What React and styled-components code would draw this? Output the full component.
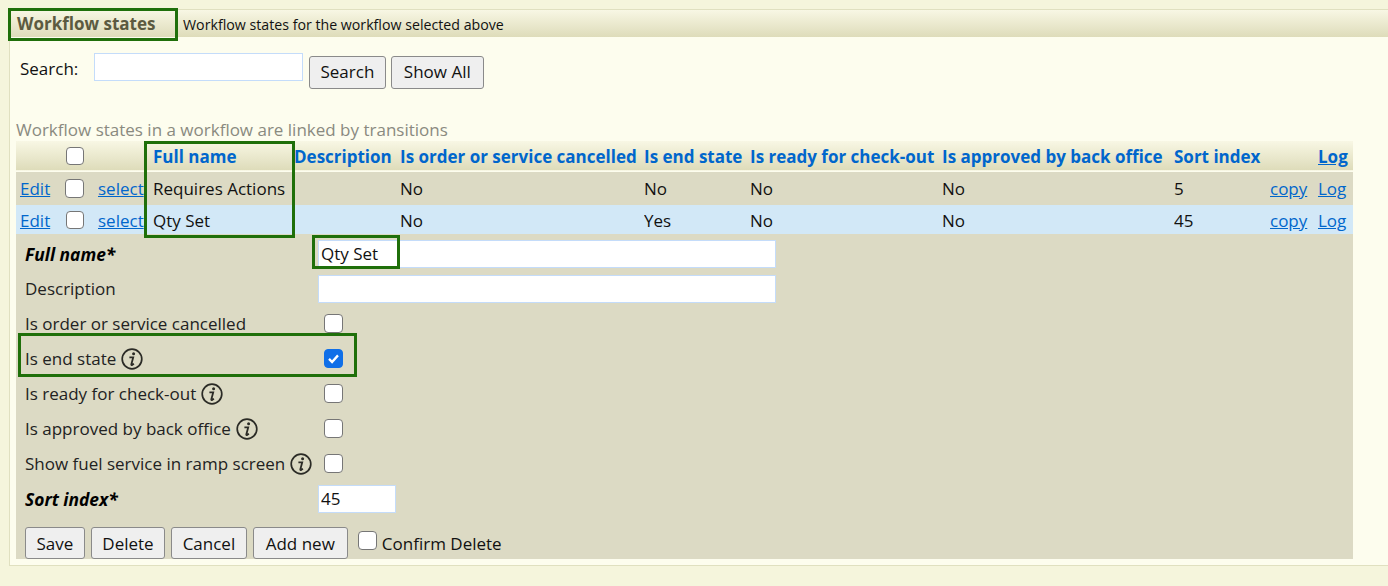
import React from 'react'
import styled, { createGlobalStyle } from 'styled-components'

const Global = createGlobalStyle`
  html, body { margin: 0; padding: 0; background: #f5f5dc; }
  body { font-family: "Open Sans", "Noto Sans", sans-serif; font-size: 17px; color: #111; }
  * { box-sizing: border-box; }
`

const Page = styled.div`
  position: relative;
  width: 1388px;
  height: 586px;
  overflow: hidden;
  padding: 9px 0 0 9px;
`

const Panel = styled.section`
  height: 557px;
  background: #fdfdee;
  border: 1px solid #e0e0c0;
  border-right: 0;
`

const PanelHeader = styled.header`
  display: flex;
  align-items: center;
  height: 27px;
  background: linear-gradient(#f8f7e4, #dedcba);
`

const PanelTitle = styled.h2`
  margin: 0;
  width: 173px;
  padding-left: 7px;
  font-size: 17px;
  font-weight: 700;
  color: #5c5a40;
`

const PanelNote = styled.span`
  font-size: 14.2px;
  padding-top: 1px;
`

const SearchRow = styled.div`
  display: flex;
  align-items: flex-start;
  padding: 16px 0 0 10px;
`

const SearchLabel = styled.label`
  width: 74px;
  font-size: 17px;
  line-height: 31px;
`

const TextInput = styled.input`
  display: block;
  width: ${p => p.$width}px;
  height: 28px;
  padding: 0 2px;
  border: 1px solid #c4dcfa;
  background: #fff;
  font: 17px "Open Sans", sans-serif;
  color: #111;
  outline: none;
`

const Button = styled.button`
  height: 32px;
  padding: 0 ${p => p.$pad ?? 10.5}px;
  border: 1px solid #8a8a8a;
  border-radius: 3px;
  background: #efefef;
  font: 17px "Open Sans", sans-serif;
  color: #111;
`

const SearchButtons = styled.div`
  display: flex;
  gap: 5px;
  margin: 3px 0 0 6px;
  ${Button} {
    height: 33px;
    padding-bottom: 2px;
  }
`

const Hint = styled.p`
  margin: 29px 0 0;
  padding: 0 0 0 6px;
  height: 23px;
  font-size: 17px;
  line-height: 23px;
  color: #8a8a80;
`

const TableWrap = styled.div`
  margin-left: 6px;
  width: 1337px;
`

const Table = styled.table`
  width: 100%;
  table-layout: fixed;
  border-collapse: collapse;
`

const HeadRow = styled.tr`
  height: 30px;
  background: linear-gradient(#f8f7e4, #dedcba);
  border-bottom: 1px solid #fdfdee;
`

const Head = styled.th`
  padding: 1px 0 0;
  text-align: left;
  font-size: 17px;
  font-weight: 700;
  color: #0066cc;
  white-space: nowrap;
  text-decoration: ${p => (p.$link ? 'underline' : 'none')};
`

const Row = styled.tr`
  height: ${p => p.$height}px;
  background: ${p => (p.$active ? '#d2e8f7' : '#dcdac4')};
`

const Cell = styled.td`
  padding: 1px 0 0 ${p => p.$pad ?? 0}px;
  font-size: 17px;
  white-space: nowrap;
  overflow: hidden;
`

const Link = styled.a`
  color: #0066cc;
  text-decoration: underline;
`

const Check = styled.input.attrs({ type: 'checkbox' })`
  appearance: none;
  display: block;
  width: ${p => p.$size ?? 19}px;
  height: ${p => p.$size ?? 19}px;
  margin: 0;
  margin-left: ${p => (p.$size ? 1 : 0)}px;
  border: 1px solid #767676;
  border-radius: 4px;
  background: #fff;
  &:checked {
    border-color: #0f6fe8;
    background: #0f6fe8 url("data:image/svg+xml,%3Csvg xmlns='http://www.w3.org/2000/svg' viewBox='0 0 19 19'%3E%3Cpath d='M4.5 10l3.4 3.4 6.6-7.4' fill='none' stroke='white' stroke-width='2.6'/%3E%3C/svg%3E") center / 100% no-repeat;
  }
`

const Form = styled.div`
  height: 325px;
  background: #dcdac4;
  padding: 2px 0 0 9px;
`

const FormRow = styled.div`
  display: grid;
  grid-template-columns: 293px 1fr;
  align-items: center;
  height: 35px;
`

const FormLabel = styled.label`
  display: flex;
  align-items: center;
  gap: 5px;
  font-size: ${p => (p.$required ? 17.4 : 17)}px;
  font-weight: ${p => (p.$required ? 700 : 400)};
  font-style: ${p => (p.$required ? 'italic' : 'normal')};
  color: ${p => (p.$required ? '#000' : '#222')};
  white-space: nowrap;
`

const CheckSlot = styled.div`
  padding-left: 6px;
`

const Actions = styled.div`
  display: flex;
  align-items: flex-start;
  gap: 6px;
  margin-top: 11px;
`

const ConfirmLabel = styled.label`
  display: flex;
  align-items: flex-start;
  gap: 5px;
  margin-left: 4px;
  font-size: 17px;
  line-height: 30px;
  padding-top: 2px;
  ${Check} { margin-top: 2px; }
`

const Mark = styled.div`
  position: absolute;
  left: ${p => p.$x}px;
  top: ${p => p.$y}px;
  width: ${p => p.$w}px;
  height: ${p => p.$h}px;
  border: 3px solid #1f6f0a;
  pointer-events: none;
`

const InfoIcon = () => (
  <svg width="22" height="22" viewBox="0 0 22 22" aria-hidden="true">
    <circle cx="11" cy="11" r="9.8" fill="none" stroke="#2b2b26" strokeWidth="1.7" />
    <circle cx="12.6" cy="5.8" r="1.5" fill="#2b2b26" />
    <path d="M8.4 9.4h3.8l-1.9 7c-.1.6.3.8.8.5l1.8-1.2" fill="none" stroke="#2b2b26" strokeWidth="1.8" />
  </svg>
)

const columns = [49, 33, 55, 141, 106, 244, 106, 192, 232, 96, 48, 35]

const heads = ['Full name', 'Description', 'Is order or service cancelled', 'Is end state', 'Is ready for check-out', 'Is approved by back office', 'Sort index']

const rows = [
  { name: 'Requires Actions', end: 'No', sort: '5', height: 34 },
  { name: 'Qty Set', end: 'Yes', sort: '45', height: 29, active: true, box: 18 },
]

const flags = [
  { label: 'Is order or service cancelled' },
  { label: 'Is end state', info: true, checked: true },
  { label: 'Is ready for check-out', info: true },
  { label: 'Is approved by back office', info: true },
  { label: 'Show fuel service in ramp screen', info: true },
]

export default function App() {
  return (
    <Page>
      <Global />
      <Panel>
        <PanelHeader>
          <PanelTitle>Workflow states</PanelTitle>
          <PanelNote>Workflow states for the workflow selected above</PanelNote>
        </PanelHeader>
        <SearchRow>
          <SearchLabel>Search:</SearchLabel>
          <TextInput $width={209} />
          <SearchButtons>
            <Button>Search</Button>
            <Button $pad={12}>Show All</Button>
          </SearchButtons>
        </SearchRow>
        <Hint>Workflow states in a workflow are linked by transitions</Hint>
        <TableWrap>
          <Table>
            <colgroup>
              {columns.map((w, i) => <col key={i} style={{ width: w }} />)}
            </colgroup>
            <thead>
              <HeadRow>
                <Head />
                <Head><Check $size={18} /></Head>
                <Head />
                {heads.map(h => <Head key={h}>{h}</Head>)}
                <Head />
                <Head $link>Log</Head>
              </HeadRow>
            </thead>
            <tbody>
              {rows.map(r => (
                <Row key={r.name} $height={r.height} $active={r.active}>
                  <Cell $pad={4}><Link>Edit</Link></Cell>
                  <Cell><Check $size={r.box} /></Cell>
                  <Cell><Link>select</Link></Cell>
                  <Cell>{r.name}</Cell>
                  <Cell />
                  <Cell>No</Cell>
                  <Cell>{r.end}</Cell>
                  <Cell>No</Cell>
                  <Cell>No</Cell>
                  <Cell>{r.sort}</Cell>
                  <Cell><Link>copy</Link></Cell>
                  <Cell><Link>Log</Link></Cell>
                </Row>
              ))}
            </tbody>
          </Table>
          <Form>
            <FormRow>
              <FormLabel $required>Full name*</FormLabel>
              <TextInput $width={458} defaultValue="Qty Set" />
            </FormRow>
            <FormRow>
              <FormLabel>Description</FormLabel>
              <TextInput $width={458} />
            </FormRow>
            {flags.map(f => (
              <FormRow key={f.label}>
                <FormLabel>{f.label}{f.info && <InfoIcon />}</FormLabel>
                <CheckSlot><Check defaultChecked={f.checked} /></CheckSlot>
              </FormRow>
            ))}
            <FormRow>
              <FormLabel $required>Sort index*</FormLabel>
              <TextInput $width={78} defaultValue="45" />
            </FormRow>
            <Actions>
              <Button>Save</Button>
              <Button>Delete</Button>
              <Button>Cancel</Button>
              <Button $pad={12}>Add new</Button>
              <ConfirmLabel><Check />Confirm Delete</ConfirmLabel>
            </Actions>
          </Form>
        </TableWrap>
      </Panel>
      <Mark $x={8} $y={8} $w={170} $h={33} />
      <Mark $x={144} $y={141} $w={151} $h={97} />
      <Mark $x={312} $y={235} $w={88} $h={34} />
      <Mark $x={18} $y={333} $w={339} $h={44} />
    </Page>
  )
}
